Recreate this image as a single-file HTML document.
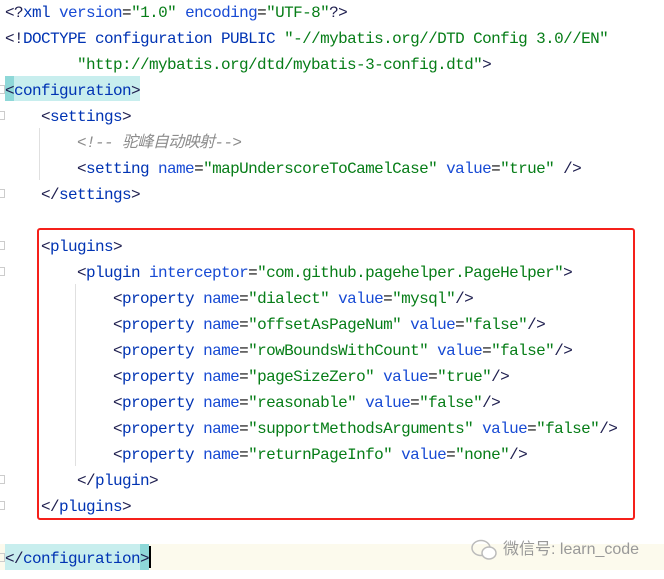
<!DOCTYPE html>
<html><head><meta charset="utf-8"><style>
body{margin:0;width:664px;height:579px;background:#fff;overflow:hidden;position:relative;font-family:"Liberation Mono","Noto Sans CJK SC",monospace;font-size:16px;letter-spacing:-0.6px}
.l{position:absolute;left:5px;height:26px;line-height:26px;white-space:pre;color:#080808;margin-top:2px}
.t{color:#0033b3}.a{color:#174ad4}.v{color:#067d17}.b{color:#202050}
.c{color:#8c8c8c;font-style:italic}
.g{position:absolute;width:1px;background:#e0e0e0}
.f{position:absolute;left:0;width:5px;height:9px;border:1px solid #ccc;border-left:none;box-sizing:border-box}
</style></head><body>
<div style="position:absolute;left:0;top:544px;width:664px;height:26px;background:#fcfaed"></div>
<div style="position:absolute;left:5px;top:76px;width:135px;height:25px;background:#c8eeee"></div>
<div style="position:absolute;left:5px;top:76px;width:9px;height:25px;background:#8ed8d8"></div>
<div style="position:absolute;left:5px;top:544px;width:144px;height:26px;background:#c8eeee"></div>
<div style="position:absolute;left:140px;top:544px;width:9px;height:26px;background:#8ed8d8"></div>
<div style="position:absolute;left:149px;top:546px;width:2px;height:22px;background:#000"></div>
<div class="g" style="left:39px;top:128px;height:52px"></div>
<div class="g" style="left:75px;top:284px;height:182px"></div>
<div class="f" style="top:85px"></div><div class="f" style="top:111px"></div><div class="f" style="top:189px"></div>
<div class="f" style="top:241px"></div><div class="f" style="top:267px"></div><div class="f" style="top:475px"></div><div class="f" style="top:501px"></div><div class="f" style="top:553px"></div>
<div class="l" style="top:-2px"><span class="b">&lt;?</span><span class="t">xml </span><span class="a">version</span>=<span class="v">"1.0" </span><span class="a">encoding</span>=<span class="v">"UTF-8"</span><span class="b">?&gt;</span></div>
<div class="l" style="top:24px"><span class="b">&lt;!</span><span class="t">DOCTYPE configuration PUBLIC </span><span class="v">"-//mybatis.org//DTD Config 3.0//EN"</span></div>
<div class="l" style="top:50px"><span class="v">        "http://mybatis.org/dtd/mybatis-3-config.dtd"</span><span class="b">&gt;</span></div>
<div class="l" style="top:76px"><span class="b">&lt;</span><span class="t">configuration</span><span class="b">&gt;</span></div>
<div class="l" style="top:102px">    <span class="b">&lt;</span><span class="t">settings</span><span class="b">&gt;</span></div>
<div class="l" style="top:128px">        <span class="c">&lt;!-- 驼峰自动映射--&gt;</span></div>
<div class="l" style="top:154px">        <span class="b">&lt;</span><span class="t">setting </span><span class="a">name</span>=<span class="v">"mapUnderscoreToCamelCase" </span><span class="a">value</span>=<span class="v">"true" </span><span class="b">/&gt;</span></div>
<div class="l" style="top:180px">    <span class="b">&lt;/</span><span class="t">settings</span><span class="b">&gt;</span></div>
<div class="l" style="top:232px">    <span class="b">&lt;</span><span class="t">plugins</span><span class="b">&gt;</span></div>
<div class="l" style="top:258px">        <span class="b">&lt;</span><span class="t">plugin </span><span class="a">interceptor</span>=<span class="v">"com.github.pagehelper.PageHelper"</span><span class="b">&gt;</span></div>
<div class="l" style="top:284px">            <span class="b">&lt;</span><span class="t">property </span><span class="a">name</span>=<span class="v">"dialect" </span><span class="a">value</span>=<span class="v">"mysql"</span><span class="b">/&gt;</span></div>
<div class="l" style="top:310px">            <span class="b">&lt;</span><span class="t">property </span><span class="a">name</span>=<span class="v">"offsetAsPageNum" </span><span class="a">value</span>=<span class="v">"false"</span><span class="b">/&gt;</span></div>
<div class="l" style="top:336px">            <span class="b">&lt;</span><span class="t">property </span><span class="a">name</span>=<span class="v">"rowBoundsWithCount" </span><span class="a">value</span>=<span class="v">"false"</span><span class="b">/&gt;</span></div>
<div class="l" style="top:362px">            <span class="b">&lt;</span><span class="t">property </span><span class="a">name</span>=<span class="v">"pageSizeZero" </span><span class="a">value</span>=<span class="v">"true"</span><span class="b">/&gt;</span></div>
<div class="l" style="top:388px">            <span class="b">&lt;</span><span class="t">property </span><span class="a">name</span>=<span class="v">"reasonable" </span><span class="a">value</span>=<span class="v">"false"</span><span class="b">/&gt;</span></div>
<div class="l" style="top:414px">            <span class="b">&lt;</span><span class="t">property </span><span class="a">name</span>=<span class="v">"supportMethodsArguments" </span><span class="a">value</span>=<span class="v">"false"</span><span class="b">/&gt;</span></div>
<div class="l" style="top:440px">            <span class="b">&lt;</span><span class="t">property </span><span class="a">name</span>=<span class="v">"returnPageInfo" </span><span class="a">value</span>=<span class="v">"none"</span><span class="b">/&gt;</span></div>
<div class="l" style="top:466px">        <span class="b">&lt;/</span><span class="t">plugin</span><span class="b">&gt;</span></div>
<div class="l" style="top:492px">    <span class="b">&lt;/</span><span class="t">plugins</span><span class="b">&gt;</span></div>
<div class="l" style="top:544px"><span class="b">&lt;/</span><span class="t">configuration</span><span class="b">&gt;</span></div>
<div style="position:absolute;left:37px;top:228px;width:598px;height:292px;border:2px solid #f5201a;border-radius:3px;box-sizing:border-box"></div>
<svg style="position:absolute;left:470px;top:538px" width="30" height="24" viewBox="0 0 30 24"><ellipse cx="11" cy="10" rx="9" ry="7.5" fill="none" stroke="#bbb" stroke-width="1.5"/><ellipse cx="19" cy="15" rx="7" ry="6" fill="#fff" stroke="#bbb" stroke-width="1.5"/></svg>
<div style="position:absolute;left:503px;top:538px;font-family:'Liberation Sans','Noto Sans CJK SC',sans-serif;font-size:16px;letter-spacing:0;color:#999;line-height:24px">微信号: learn_code</div>
</body></html>
